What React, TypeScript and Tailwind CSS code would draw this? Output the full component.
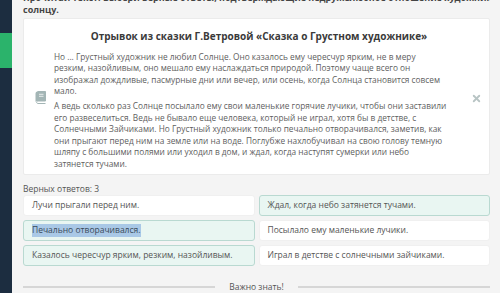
import { X } from "lucide-react";

const answers = [
  { text: "Лучи прыгали перед ним.", picked: false },
  { text: "Ждал, когда небо затянется тучами.", picked: true },
  { text: "Печально отворачивался.", picked: true, highlight: true },
  { text: "Посылало ему маленькие лучики.", picked: false },
  { text: "Казалось чересчур ярким, резким, назойливым.", picked: true },
  { text: "Играл в детстве с солнечными зайчиками.", picked: false },
];

const firstPara = [
  "Но ... Грустный художник не любил Солнце. Оно казалось ему чересчур ярким, не в меру",
  "резким, назойливым, оно мешало ему наслаждаться природой. Поэтому чаще всего он",
  "изображал дождливые, пасмурные дни или вечер, или осень, когда Солнца становится совсем",
  "мало.",
];

const secondPara = [
  "А ведь сколько раз Солнце посылало ему свои маленькие горячие лучики, чтобы они заставили",
  "его развеселиться. Ведь не бывало еще человека, который не играл, хотя бы в детстве, с",
  "Солнечными Зайчиками. Но Грустный художник только печально отворачивался, заметив, как",
  "они прыгают перед ним на земле или на воде. Поглубже нахлобучивал на свою голову темную",
  "шляпу с большими полями или уходил в дом, и ждал, когда наступят сумерки или небо",
  "затянется тучами.",
];

function BookIcon() {
  return (
    <svg width="11" height="13" viewBox="0 0 11 13">
      <path d="M2.5 0.5h8v9.5H2.6a1.3 1.3 0 0 0 0 2.5h7.9" fill="none" stroke="#a3b5b5" strokeWidth="1" />
      <path d="M2.5 0.5h8v9.5H2.5a2 2 0 0 0-2 1V2.5A2 2 0 0 1 2.5 0.5z" fill="#a3b5b5" />
      <path d="M4 3.3h4.5M4 5.3h4.5" stroke="#eef2f2" strokeWidth="0.9" />
    </svg>
  );
}

export default function App() {
  return (
    <div
      className="flex h-[293px] w-[500px] overflow-hidden bg-[#f4f4f4] text-[#555]"
      style={{ fontFamily: '"Open Sans", "Noto Sans", sans-serif' }}
    >
      <div className="flex w-[12px] shrink-0 flex-col bg-[#1c2d40]">
        <div className="mt-[33px] h-[35px] bg-[#2bb36b]" />
      </div>

      <div className="flex min-w-0 flex-1 flex-col pl-[11px] pr-[10px]">
        <div className="-mt-[8px] overflow-hidden text-[9px] leading-[12px] font-bold text-[#444]">
          <p className="whitespace-nowrap">Прочитай текст. Выбери верные ответы, подтверждающие недружелюбное отношение художника к</p>
          <p>солнцу.</p>
        </div>

        <div className="mt-[2px] flex items-center rounded-[2px] border border-[#ebebeb] bg-white pb-[5px] pt-[10px]">
          <div className="flex w-[30px] shrink-0 justify-center pl-[2px] pb-[3px]">
            <BookIcon />
          </div>
          <div className="flex w-[410px] shrink-0 flex-col">
            <h2 className="text-center text-[10px] leading-[14px] font-bold text-[#3a3a3a]">
              Отрывок из сказки Г.Ветровой «Сказка о Грустном художнике»
            </h2>
            <div className="mt-[8px] flex flex-col gap-[3.5px] text-[8.3px] leading-[11.5px] text-[#5e5e5e]">
              <p>
                {firstPara.map((l) => (
                  <span key={l} className="block whitespace-nowrap">{l}</span>
                ))}
              </p>
              <p>
                {secondPara.map((l) => (
                  <span key={l} className="block whitespace-nowrap">{l}</span>
                ))}
              </p>
            </div>
          </div>
          <div className="flex flex-1 justify-center">
            <X size={11} strokeWidth={4} className="text-[#b8c4c4]" />
          </div>
        </div>

        <p className="mt-[8px] text-[8.5px] leading-[12px] text-[#555]">Верных ответов: 3</p>

        <div className="grid grid-cols-2 gap-x-[4px] gap-y-[4px]">
          {answers.map((a) => (
            <div
              key={a.text}
              className={
                a.picked
                  ? "flex h-[21px] items-center rounded-[3px] border border-[#b9d9d1] bg-[#e9f6f2] px-[8px] text-[8.5px] text-[#555]"
                  : "flex h-[21px] items-center rounded-[3px] border border-[#f0f0f0] bg-white px-[8px] text-[8.5px] text-[#555]"
              }
            >
              {a.highlight ? (
                <span className="bg-[#a9c8e6] text-[#3a4a5a]">{a.text}</span>
              ) : (
                <span>{a.text}</span>
              )}
            </div>
          ))}
        </div>

        <div className="mt-[15px] flex items-center gap-[14px]">
          <div className="h-[2px] flex-1 bg-[#d6d6d6]" />
          <span className="text-[8.5px] leading-[12px] text-[#555]">Важно знать!</span>
          <div className="h-[2px] flex-1 bg-[#d6d6d6]" />
        </div>
      </div>
    </div>
  );
}
